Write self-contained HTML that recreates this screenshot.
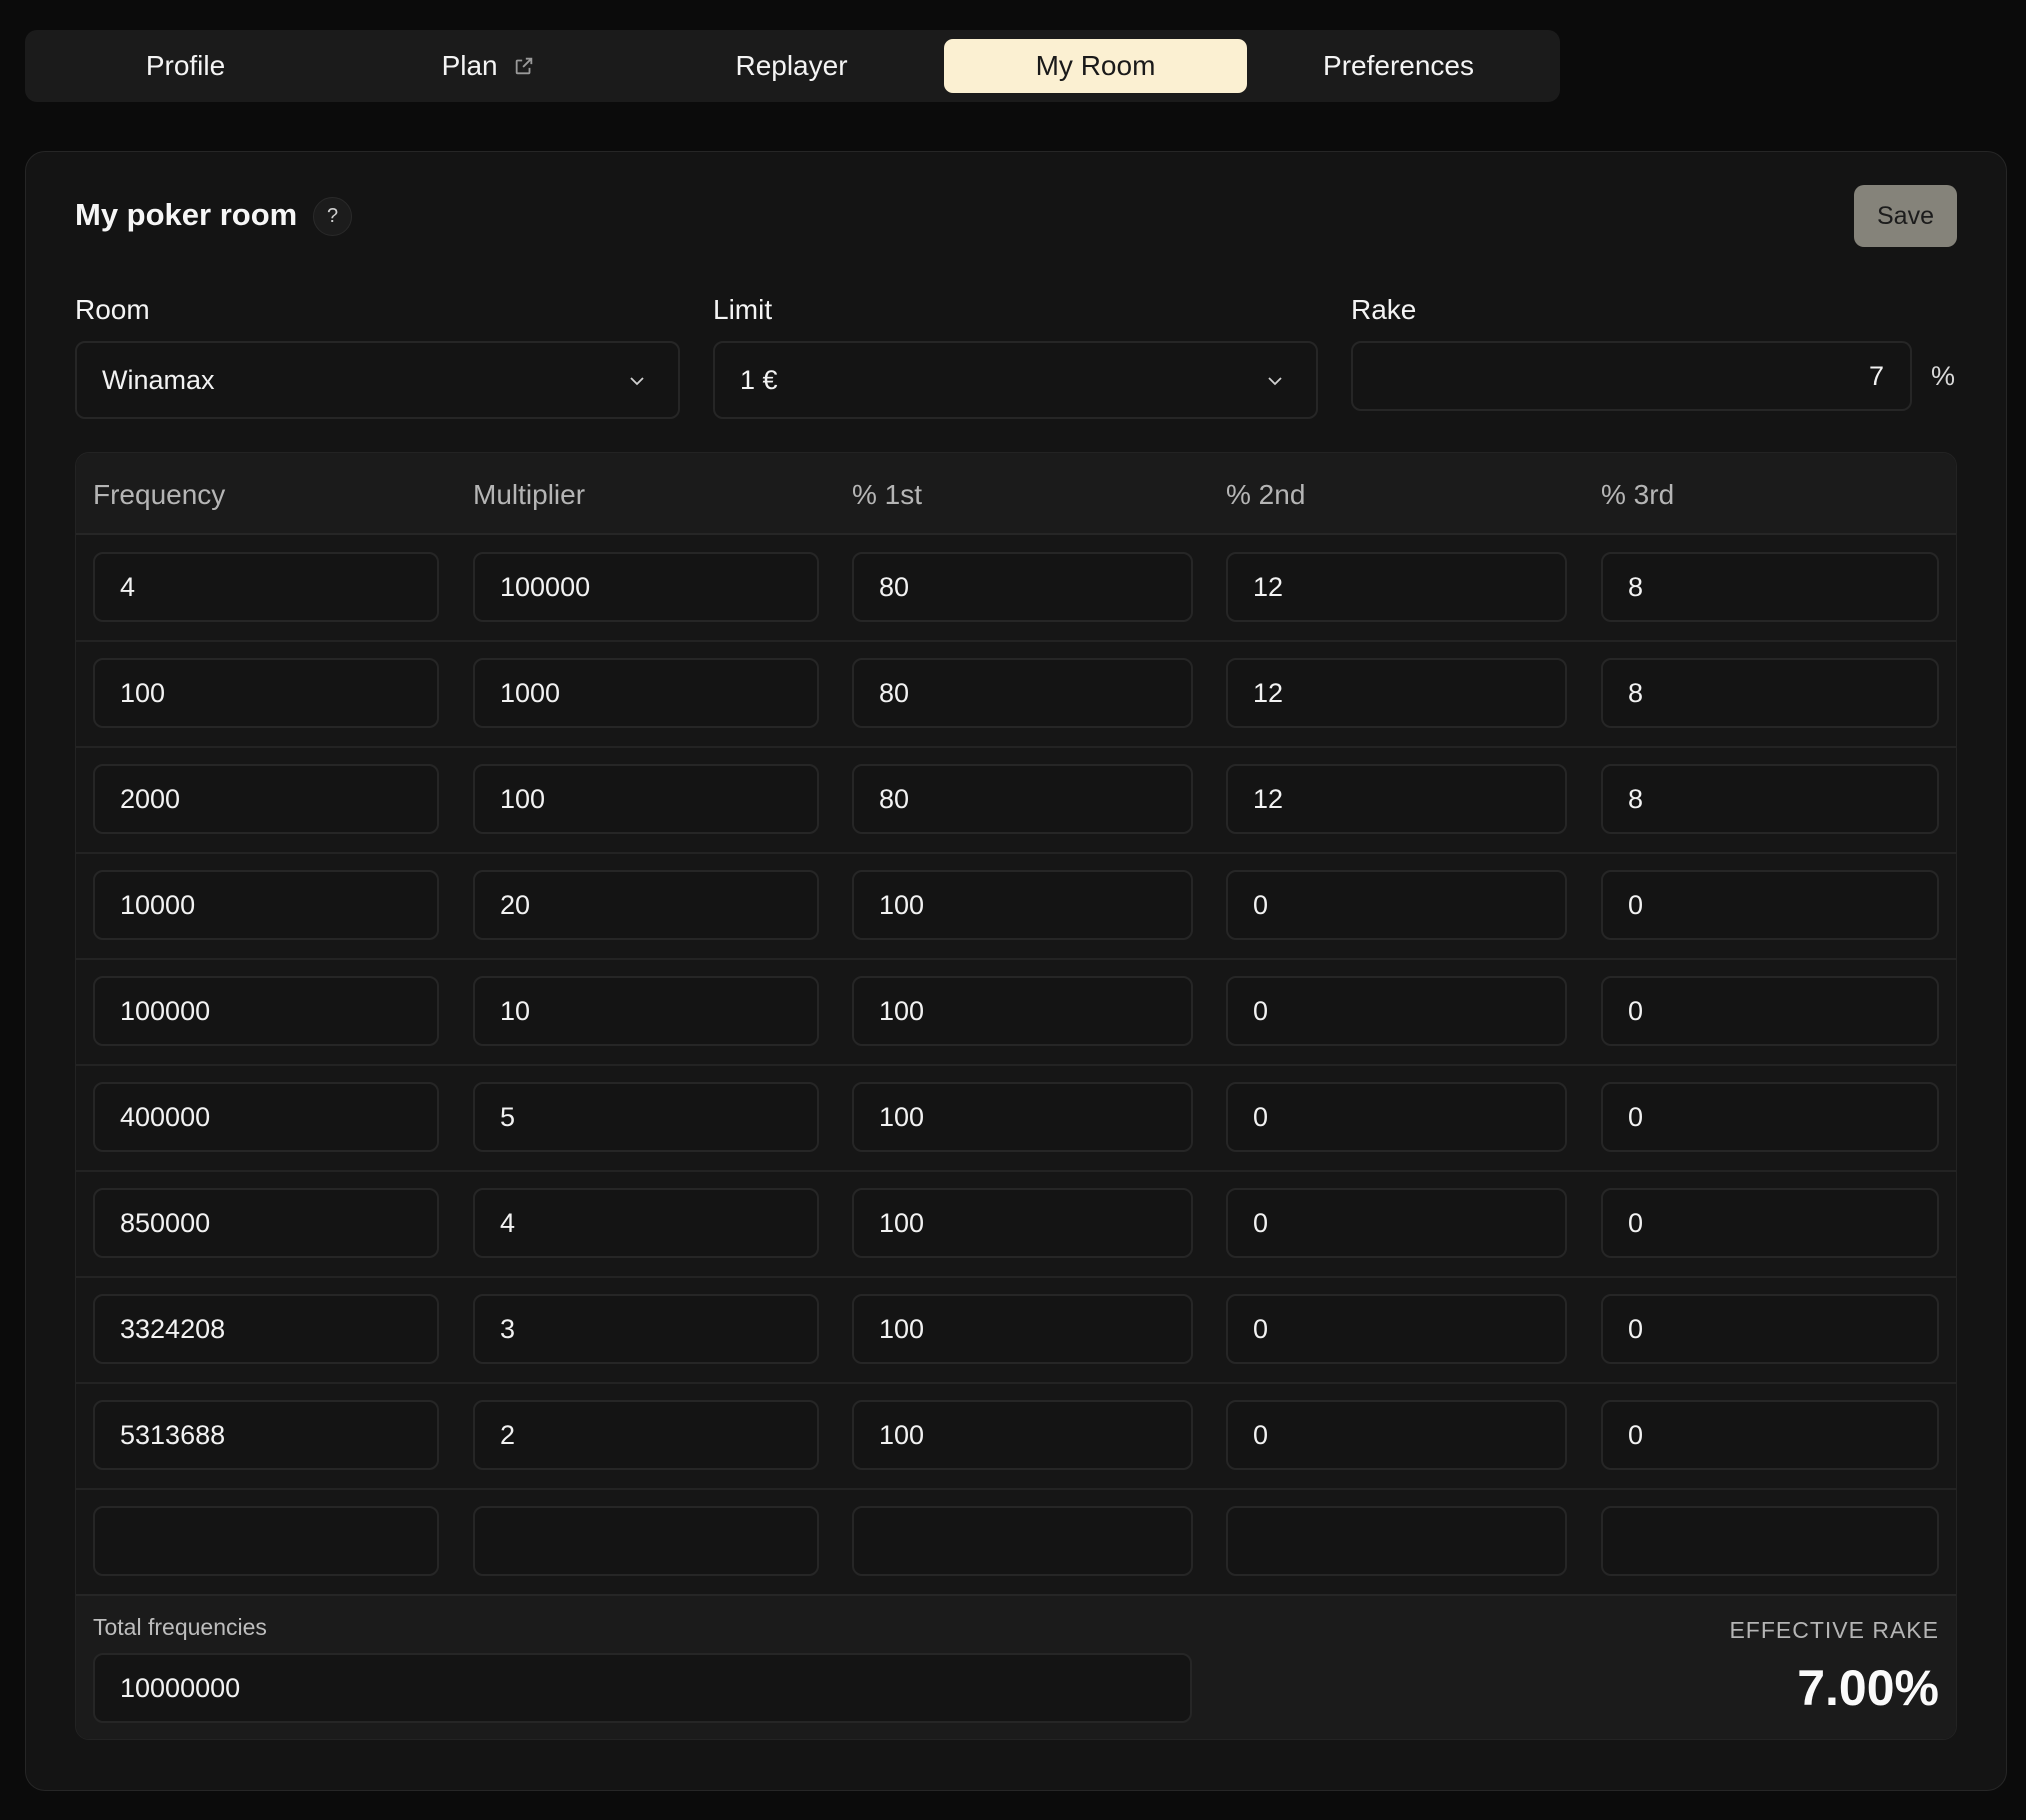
<!DOCTYPE html>
<html><head><meta charset="utf-8"><style>
*{box-sizing:border-box;margin:0;padding:0}
body{width:2026px;height:1820px;background:#0b0b0b;font-family:"Liberation Sans",sans-serif;color:#f2f2f2;position:relative;overflow:hidden}
.abs{position:absolute}
.tabs{left:25px;top:30px;width:1535px;height:72px;background:#1b1b1b;border-radius:12px}
.tab{position:absolute;top:9px;height:54px;width:303px;display:flex;align-items:center;justify-content:center;font-size:28px;color:#f4f4f4}
.tab.act{background:#fbf0d2;color:#1a1a1a;border-radius:9px}
.card{left:25px;top:151px;width:1982px;height:1640px;background:#141414;border:1.5px solid #262626;border-radius:20px}
.lbl{font-size:28px;color:#f4f4f4}
.box{position:absolute;background:#141414;border:2px solid #262626;border-radius:10px;font-size:27px;color:#f2f2f2;display:flex;align-items:center;padding-left:25px}
.table{left:75px;top:452px;width:1882px;height:1288px;background:#161616;border:1.5px solid #232323;border-radius:14px;overflow:hidden}
.hdr{position:absolute;left:0;top:0;width:100%;height:82px;background:#1b1b1b;border-bottom:2px solid #262626}
.h{position:absolute;top:42px;transform:translateY(-50%);font-size:28px;color:#b5b5b5}
.sep{position:absolute;left:0;width:100%;height:2px;background:#232323}
.foot{position:absolute;left:0;top:1141px;width:100%;height:147px;background:#1b1b1b;border-top:2px solid #262626}
</style></head><body>
<div class="abs tabs">
<div class="tab" style="left:9px">Profile</div>
<div class="tab" style="left:312px">Plan&nbsp;<svg width="22" height="22" viewBox="0 0 24 24" fill="none" stroke="#9a9a9a" stroke-width="2" style="margin-left:8px"><path d="M14 4h6v6M20 4l-9 9M18 14v5a1 1 0 0 1-1 1H5a1 1 0 0 1-1-1V7a1 1 0 0 1 1-1h5"/></svg></div>
<div class="tab" style="left:615px">Replayer</div>
<div class="tab act" style="left:919px">My Room</div>
<div class="tab" style="left:1222px">Preferences</div>
</div>
<div class="abs card"></div>
<div class="abs" style="left:75px;top:197px;font-size:31px;font-weight:bold;color:#f6f6f6">My poker room</div>
<div class="abs" style="left:313px;top:197px;width:39px;height:39px;border-radius:50%;background:#1c1c1c;border:1.5px solid #2a2a2a;color:#cfcfcf;font-size:20px;display:flex;align-items:center;justify-content:center">?</div>
<div class="abs" style="left:1854px;top:185px;width:103px;height:62px;background:#85837a;border-radius:10px;color:#1c1c1c;font-size:25px;display:flex;align-items:center;justify-content:center">Save</div>
<div class="abs lbl" style="left:75px;top:294px">Room</div>
<div class="abs lbl" style="left:713px;top:294px">Limit</div>
<div class="abs lbl" style="left:1351px;top:294px">Rake</div>
<div class="box" style="left:75px;top:341px;width:605px;height:78px">Winamax<svg class="abs" style="left:550px;top:28px" width="20" height="20" viewBox="0 0 20 20" fill="none" stroke="#d0d0d0" stroke-width="1.8"><path d="M4 7l6 6 6-6"/></svg></div>
<div class="box" style="left:713px;top:341px;width:605px;height:78px">1 €<svg class="abs" style="left:550px;top:28px" width="20" height="20" viewBox="0 0 20 20" fill="none" stroke="#d0d0d0" stroke-width="1.8"><path d="M4 7l6 6 6-6"/></svg></div>
<div class="box" style="left:1351px;top:341px;width:561px;height:70px;justify-content:flex-end;padding-right:26px">7</div>
<div class="abs" style="left:1931px;top:361px;font-size:27px;color:#d8d8d8">%</div>
<div class="abs table">
<div class="hdr"></div>
<div class="h" style="left:17px">Frequency</div>
<div class="h" style="left:397px">Multiplier</div>
<div class="h" style="left:776px">% 1st</div>
<div class="h" style="left:1150px">% 2nd</div>
<div class="h" style="left:1525px">% 3rd</div>
<div id="rows"></div>
<div class="foot">
<div class="abs" style="left:17px;top:18px;font-size:23px;color:#bdbdbd">Total frequencies</div>
<div class="box" style="left:17px;top:57px;width:1099px;height:70px">10000000</div>
<div class="abs" style="right:17px;top:21px;font-size:23px;color:#b5b5b5;letter-spacing:1px">EFFECTIVE RAKE</div>
<div class="abs" style="right:17px;top:63px;font-size:50px;font-weight:bold;color:#fafafa">7.00%</div>
</div>
</div>
<script>
var d=[["4","100000","80","12","8"],["100","1000","80","12","8"],["2000","100","80","12","8"],["10000","20","100","0","0"],["100000","10","100","0","0"],["400000","5","100","0","0"],["850000","4","100","0","0"],["3324208","3","100","0","0"],["5313688","2","100","0","0"],["","","","",""]];
var xs=[[17,346],[397,346],[776,341],[1150,341],[1525,338]];
var h="";
for(var i=0;i<10;i++){var t=82+i*106;
if(i>0)h+='<div class="sep" style="top:'+(t-1)+'px"></div>';
for(var j=0;j<5;j++)h+='<div class="box" style="left:'+xs[j][0]+'px;top:'+(t+17)+'px;width:'+xs[j][1]+'px;height:70px">'+d[i][j]+'</div>';}
document.getElementById("rows").innerHTML=h;
</script>
</body></html>
